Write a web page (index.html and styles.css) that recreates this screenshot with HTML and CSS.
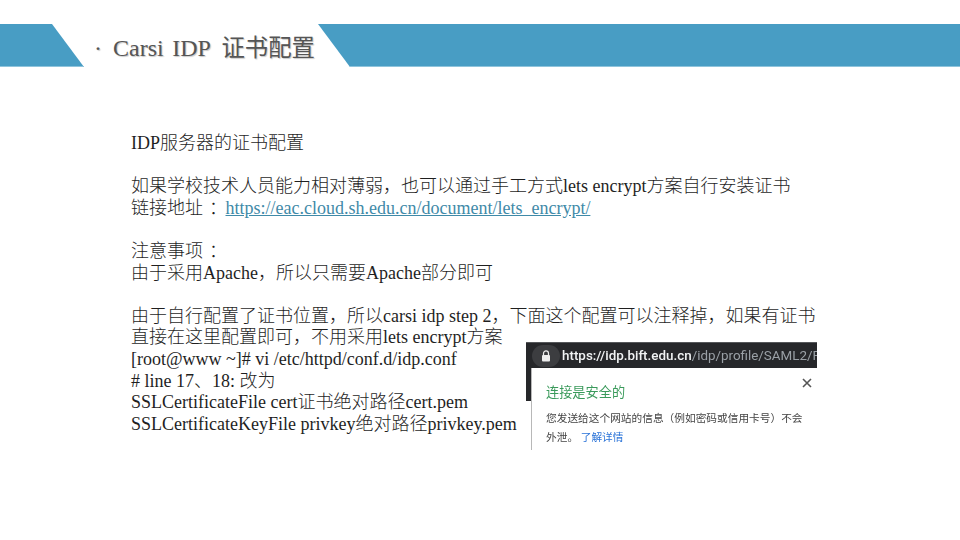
FILE: index.html
```html
<!DOCTYPE html>
<html lang="zh-CN">
<head>
<meta charset="utf-8">
<title>Carsi IDP 证书配置</title>
<link rel="stylesheet" href="styles.css">
</head>
<body>
<div class="slide">
  <header class="banner">
    <div class="band band-left"></div>
    <h1 class="title"><span class="dot">·</span><span>Carsi IDP <span class="title-cjk">证书配置</span></span></h1>
    <div class="band band-right"></div>
  </header>
  <main class="content">
    <p class="line">IDP服务器的证书配置</p>
    <p class="line gap">如果学校技术人员能力相对薄弱，也可以通过手工方式lets encrypt方案自行安装证书</p>
    <p class="line">链接地址<span class="colon">：</span> <a class="link" href="#">https://eac.cloud.sh.edu.cn/document/lets_encrypt/</a></p>
    <p class="line gap">注意事项<span class="colon">：</span></p>
    <p class="line">由于采用Apache，所以只需要Apache部分即可</p>
    <p class="line gap">由于自行配置了证书位置，所以carsi idp step 2，下面这个配置可以注释掉，如果有证书</p>
    <p class="line">直接在这里配置即可，不用采用lets encrypt方案</p>
    <p class="line">[root@www ~]# vi /etc/httpd/conf.d/idp.conf</p>
    <p class="line"># line 17、18: 改为</p>
    <p class="line">SSLCertificateFile cert证书绝对路径cert.pem</p>
    <p class="line">SSLCertificateKeyFile privkey绝对路径privkey.pem</p>
  </main>
  <figure class="shot">
    <div class="urlbar">
      <span class="lock"><svg width="10" height="12" viewBox="0 0 10 12"><path d="M2.5 5V3.4a2.5 2.5 0 0 1 5 0V5" fill="none" stroke="#eee" stroke-width="1.2"/><rect x="1" y="5" width="8" height="6.5" rx="1" fill="#eee"/></svg></span>
      <span class="url"><b>https://idp.bift.edu.cn</b>/idp/profile/SAML2/R</span>
    </div>
    <div class="popup">
      <svg class="close" width="10" height="10" viewBox="0 0 10 10"><path d="M1 1l8 8M9 1l-8 8" stroke="#555" stroke-width="1.6"/></svg>
      <div class="secure">连接是安全的</div>
      <div class="info">您发送给这个网站的信息（例如密码或信用卡号）不会</div>
      <div class="info">外泄。 <span class="more">了解详情</span></div>
    </div>
  </figure>
</div>
</body>
</html>
```
FILE: styles.css
```css
* { box-sizing: border-box; }
html, body { margin: 0; padding: 0; background: #fff; }
.slide { position: relative; width: 960px; height: 540px; overflow: hidden; background: #fff; padding-top: 24px; }
.banner { display: flex; height: 43px; align-items: stretch; }
.band { background: #489dc4; border-bottom: 1px solid #8fc4dc; }
.band-left { width: 84px; flex: none; clip-path: polygon(0 0, 52px 0, 84px 100%, 0 100%); }
.band-right { flex: 1; clip-path: polygon(0 0, 100% 0, 100% 100%, 32px 100%); }
.title { width: 234px; flex: none; margin: 0; padding: 10px 0 0 10px; display: flex; gap: 14px; font: 400 24px/1.2 "Liberation Serif", "Noto Sans CJK SC", serif; word-spacing: 2.5px; color: #555; text-shadow: 1px 1px 1px rgba(0, 0, 0, .22); white-space: nowrap; }
.title-cjk { font-size: 23.4px; margin-left: 3px; }
.dot { width: 5px; }
.content { padding: 0 0 0 131px; margin-top: 66px; font: 300 18px/21.6px "Liberation Serif", "Noto Sans CJK SC", serif; color: #1f1f1f; }
.line { margin: 0; white-space: nowrap; height: 21.6px; }
.gap { margin-top: 21.6px; }
.colon { padding-left: 6px; margin-right: -6px; }
.link { color: #3f8aa8; text-decoration: underline; }
.shot { position: absolute; left: 526px; top: 342px; width: 291px; height: 108px; margin: 0; overflow: hidden; background: #fff; font-family: "Roboto", "Noto Sans CJK SC", sans-serif; filter: blur(.35px); }
.urlbar { height: 59px; background: #26272a; border-top: 1px solid #55575a; display: flex; align-items: flex-start; gap: 2px; padding: 2px 0 0 6px; color: #9aa0a6; font-size: 13.4px; line-height: 22px; white-space: nowrap; overflow: hidden; }
.urlbar b { color: #f1f3f4; font-weight: 500; }
.lock { width: 28px; height: 22px; border-radius: 11px; background: #3c3d40; display: flex; align-items: center; justify-content: center; flex: none; }
.popup { position: absolute; left: 5px; top: 26px; width: 290px; height: 90px; background: #fff; border-left: 1px solid #b8b8b8; padding: 15px 0 0 14px; }
.close { position: absolute; right: 9px; top: 10px; }
.secure { color: #3a9a5b; font-size: 13.2px; line-height: 20px; }
.info { color: #444; font-size: 10.7px; line-height: 19px; white-space: nowrap; }
.secure + .info { margin-top: 6px; }
.more { color: #2a73d8; }
```
